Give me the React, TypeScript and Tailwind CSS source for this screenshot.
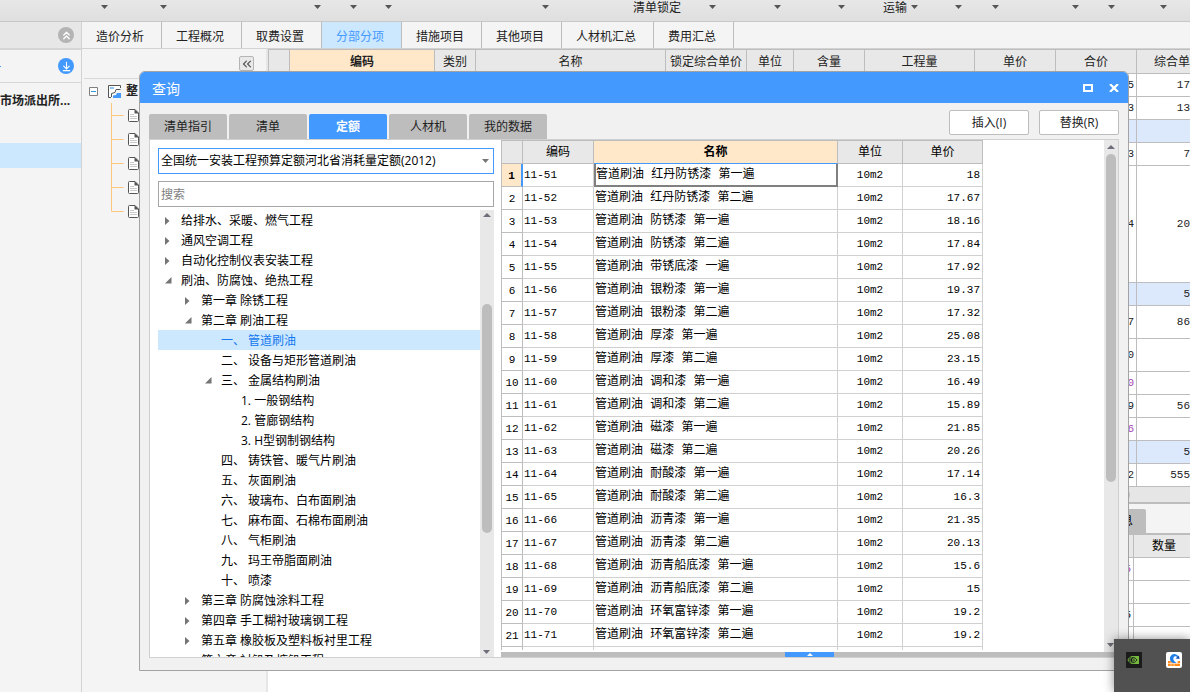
import { useState } from "react";
import { ArrowDownToLine, ChevronsLeft, ChevronsUp } from "lucide-react";

const toolbarItems = [
  { width: "w-[109px]" },
  { width: "w-[59px]" },
  { width: "w-[154px]" },
  { width: "w-9" },
  { width: "w-[35px]" },
  { width: "w-[157px]" },
  { width: "w-[167px]", label: "清单锁定", gap: "gap-7" },
  { width: "w-[65px]" },
  { width: "w-16" },
  { width: "w-[73px]", label: "运输", gap: "gap-1" },
  { width: "w-11" },
  { width: "w-[37px]" },
  { width: "w-20" },
  { width: "w-9" },
  { width: "w-[52px]" },
];

const mainTabs = ["造价分析", "工程概况", "取费设置", "分部分项", "措施项目", "其他项目", "人材机汇总", "费用汇总"];

const mainColumns = [
  { label: "", width: "w-[21px]" },
  { label: "编码", width: "w-[145px]" },
  { label: "类别", width: "w-[41px]" },
  { label: "名称", width: "w-[190px]" },
  { label: "锁定综合单价", width: "w-[81px]" },
  { label: "单位", width: "w-[47px]" },
  { label: "含量", width: "w-[71px]" },
  { label: "工程量", width: "w-[110px]" },
  { label: "单价", width: "w-[81px]" },
  { label: "合价", width: "w-[81px]" },
];

const mainRows = [
  { total: "5", price: "17", height: "h-[23px]" },
  { total: "3", price: "13", height: "h-[23px]" },
  { total: "", price: "", height: "h-[23px]", section: true },
  { total: "3", price: "7", height: "h-[23px]" },
  { total: "4", price: "20", height: "h-[117px]" },
  { total: "", price: "5", height: "h-[23px]", section: true },
  { total: "7", price: "86", height: "h-[33px]" },
  { total: "0", price: "", height: "h-[33px]" },
  { total: "0", price: "", height: "h-[23px]", purple: true },
  { total: "9", price: "56", height: "h-[23px]" },
  { total: "6", price: "", height: "h-[23px]", purple: true },
  { total: "", price: "5", height: "h-[23px]", section: true },
  { total: "2", price: "555", height: "h-[23px]" },
];

const dialogTabs = ["清单指引", "清单", "定额", "人材机", "我的数据"];

type TreeNode = { text: string; level: number; state?: "open" | "closed" };

const tree: TreeNode[] = [
  { text: "给排水、采暖、燃气工程", level: 0, state: "closed" },
  { text: "通风空调工程", level: 0, state: "closed" },
  { text: "自动化控制仪表安装工程", level: 0, state: "closed" },
  { text: "刷油、防腐蚀、绝热工程", level: 0, state: "open" },
  { text: "第一章 除锈工程", level: 1, state: "closed" },
  { text: "第二章 刷油工程", level: 1, state: "open" },
  { text: "一、 管道刷油", level: 2 },
  { text: "二、 设备与矩形管道刷油", level: 2 },
  { text: "三、 金属结构刷油", level: 2, state: "open" },
  { text: "1. 一般钢结构", level: 3 },
  { text: "2. 管廊钢结构", level: 3 },
  { text: "3. H型钢制钢结构", level: 3 },
  { text: "四、 铸铁管、暖气片刷油", level: 2 },
  { text: "五、 灰面刷油", level: 2 },
  { text: "六、 玻璃布、白布面刷油", level: 2 },
  { text: "七、 麻布面、石棉布面刷油", level: 2 },
  { text: "八、 气柜刷油", level: 2 },
  { text: "九、 玛王帝脂面刷油", level: 2 },
  { text: "十、 喷漆", level: 2 },
  { text: "第三章 防腐蚀涂料工程", level: 1, state: "closed" },
  { text: "第四章 手工糊衬玻璃钢工程", level: 1, state: "closed" },
  { text: "第五章 橡胶板及塑料板衬里工程", level: 1, state: "closed" },
  { text: "第六章 衬铅及搪铅工程", level: 1, state: "closed" },
];

const indent = ["pl-0", "pl-5", "pl-10", "pl-15"];

const quotaRows = [
  ["11-51", "管道刷油 红丹防锈漆 第一遍", "18"],
  ["11-52", "管道刷油 红丹防锈漆 第二遍", "17.67"],
  ["11-53", "管道刷油 防锈漆 第一遍", "18.16"],
  ["11-54", "管道刷油 防锈漆 第二遍", "17.84"],
  ["11-55", "管道刷油 带锈底漆 一遍", "17.92"],
  ["11-56", "管道刷油 银粉漆 第一遍", "19.37"],
  ["11-57", "管道刷油 银粉漆 第二遍", "17.32"],
  ["11-58", "管道刷油 厚漆 第一遍", "25.08"],
  ["11-59", "管道刷油 厚漆 第二遍", "23.15"],
  ["11-60", "管道刷油 调和漆 第一遍", "16.49"],
  ["11-61", "管道刷油 调和漆 第二遍", "15.89"],
  ["11-62", "管道刷油 磁漆 第一遍", "21.85"],
  ["11-63", "管道刷油 磁漆 第二遍", "20.26"],
  ["11-64", "管道刷油 耐酸漆 第一遍", "17.14"],
  ["11-65", "管道刷油 耐酸漆 第二遍", "16.3"],
  ["11-66", "管道刷油 沥青漆 第一遍", "21.35"],
  ["11-67", "管道刷油 沥青漆 第二遍", "20.13"],
  ["11-68", "管道刷油 沥青船底漆 第一遍", "15.6"],
  ["11-69", "管道刷油 沥青船底漆 第二遍", "15"],
  ["11-70", "管道刷油 环氧富锌漆 第一遍", "19.2"],
  ["11-71", "管道刷油 环氧富锌漆 第二遍", "19.2"],
];

const monoFont = "font-['Liberation_Mono','Noto_Sans_CJK_SC',monospace]";
const mono = "font-['Liberation_Mono','Noto_Sans_CJK_SC',monospace] text-[11px]";

function Caret({ up = false, className = "" }: { up?: boolean; className?: string }) {
  return (
    <svg width="8" height="4" viewBox="0 0 8 4" className={`shrink-0 ${className}`} fill="currentColor">
      <path d={up ? "M0 4 4 0l4 4z" : "M0 0h7L3.5 4z"} />
    </svg>
  );
}

function TreeArrow({ state }: { state?: "open" | "closed" }) {
  return (
    <span className="flex w-[23px] shrink-0 items-center pl-[7px] text-[#757575]">
      {state === "closed" && (
        <svg width="5" height="8" viewBox="0 0 5 8" fill="currentColor"><path d="M0 0l4.5 4L0 8z" /></svg>
      )}
      {state === "open" && (
        <svg width="7" height="7" viewBox="0 0 7 7" fill="currentColor"><path d="M6.5 0v6.500H0z" /></svg>
      )}
    </span>
  );
}

function DocIcon() {
  return (
    <svg width="11" height="13" viewBox="0 0 11 13" fill="none">
      <path d="M1.500 .5h5.500l3.500 3.500v7.500q0 1-1 1h-8q-1 0-1-1v-10q0-1 1-1z" fill="#fff" stroke="#555" />
      <path d="M6.500 0v4.500H11z" fill="#555" />
      <path d="M2 5.500h4M2 7.500h7M2 9.500h7" stroke="#c8c8c8" />
    </svg>
  );
}

function Toolbar() {
  return (
    <header className="flex h-[22px] shrink-0 overflow-hidden border-b border-[#c8c8c8] bg-linear-to-b from-[#e7e7e7] to-[#dfdfdf]">
      {toolbarItems.map((item, i) => (
        <button
          key={i}
          aria-label={item.label ?? "更多"}
          className={`flex h-4 shrink-0 justify-end whitespace-nowrap text-[#222] ${item.width} ${item.gap ?? ""}`}
        >
          {item.label}
          <Caret className="mt-[5px] text-[#555]" />
        </button>
      ))}
    </header>
  );
}

function Sidebar() {
  return (
    <aside className="w-[82px] shrink-0 border-r border-[#d2d2d2] bg-[#f4f4f4]">
      <div className="flex h-7 items-center justify-end border-b-2 border-[#d6d6d6] bg-[#e7e7e7] pr-[7px]">
        <button aria-label="收起" className="flex size-4 items-center justify-center rounded-full bg-[#b4b4b4] text-white">
          <ChevronsUp size={13} strokeWidth={2.5} />
        </button>
      </div>
      <div className="flex h-[33px] items-center justify-between border-b border-[#d6d6d6] pr-[7px]">
        <span className="h-px w-px bg-[#4499ff]" />
        <button aria-label="下载" className="flex size-4 items-center justify-center rounded-full bg-[#4499ff] text-white">
          <ArrowDownToLine size={11} strokeWidth={2.5} />
        </button>
      </div>
      <p className="h-[60px] overflow-hidden pt-2 leading-5 font-bold whitespace-nowrap text-[#222]">市场派出所...</p>
      <div className="h-[25px] bg-[#cce8ff]" />
    </aside>
  );
}

function ProjectTree() {
  return (
    <div className="w-[186px] shrink-0 border-r-2 border-[#e6e6e6] bg-[#f4f4f4] pl-[2px]">
      <div className="flex h-[30px] items-center justify-end border-b border-[#d9d9d9] pr-3">
        <button aria-label="折叠" className="flex size-[15px] items-center justify-center rounded-xs border border-[#b5b5b5] bg-[#e9e9e9] text-[#555]">
          <ChevronsLeft size={14} strokeWidth={2} className="shrink-0" />
        </button>
      </div>
      <div className="flex h-6 items-center pl-[5px]">
        <svg width="9" height="9" viewBox="0 0 9 9" fill="none">
          <path d="M.5.5h8v8h-8z" fill="#fff" stroke="#808080" />
          <path d="M2 4.500h5" stroke="#2f9bd8" />
        </svg>
        <svg width="13" height="13" viewBox="0 0 13 13" fill="none" className="ml-[10px]">
          <path d="M12.500 3V.5H.5v12H3" fill="#fff" stroke="#555" />
          <path d="M2 2h4v2H2z" fill="#8cc4f5" />
          <path d="M3.500 12V8.500L7 7.500l1-3h4.500" stroke="#555" />
          <path d="M5 13v-2.500l3-.5 1-2h4v5z" fill="#4499ff" />
        </svg>
        <span className="ml-[5px] font-bold text-[#222]">整</span>
      </div>
      <div className="flex pl-[27px]">
        <svg width="13" height="109" viewBox="0 0 13 109" fill="none" stroke="#fcc77c">
          <path d="M.5 0v108.500M.5 12.500h12M.5 36.500h12M.5 60.500h12M.5 84.500h12M.5 108.500h12" />
        </svg>
        <ul className="ml-1">
          {[0, 1, 2, 3, 4].map((n) => (
            <li key={n} className="flex h-6 items-center"><DocIcon /></li>
          ))}
        </ul>
      </div>
    </div>
  );
}

function MainTable() {
  return (
    <table className="w-full table-fixed border-separate border-spacing-0 border-t border-l border-[#bdbdbd] bg-white text-[#222]">
      <thead>
        <tr className="h-6">
          {mainColumns.map((col) => (
            <th
              key={col.label}
              className={`border-r border-b border-[#bdbdbd] p-0 whitespace-nowrap ${col.width} ${col.label === "编码" ? "bg-[#ffe8ca] font-bold" : "bg-[#e8e8e8] font-normal"}`}
            >
              {col.label}
            </th>
          ))}
          <th className="overflow-hidden border-b border-[#bdbdbd] bg-[#e8e8e8] p-0 pl-[17px] text-left font-normal whitespace-nowrap">综合单价</th>
        </tr>
      </thead>
      <tbody>
        {mainRows.map((row, i) => (
          <tr key={i} className={`${row.height} ${row.section ? "bg-[#dce9fd]" : ""} ${row.purple ? "text-[#a33fb5]" : ""}`}>
            <td colSpan={10} className={`border-r border-b border-[#bdbdbd] p-0 pr-[2px] text-right leading-4 ${mono}`}>{row.total}</td>
            <td className={`border-b border-[#bdbdbd] p-0 text-right leading-4 ${mono}`}>{row.price}</td>
          </tr>
        ))}
      </tbody>
    </table>
  );
}

function DetailPanel() {
  return (
    <section>
      <div className="flex h-[17px] items-center border-b-2 border-[#bdbdbd] bg-[#e6e6e6] pr-[60px]">
        <div className="h-[10px] flex-1 rounded-full bg-[#bdbdbd]" />
      </div>
      <div className="flex h-[31px] items-end justify-end border-b-2 border-[#bdbdbd] bg-[#f4f4f4] pr-11">
        <button className="h-6 w-20 rounded-t-xs bg-[#bdbdbd] pr-[13px] text-right">说明信息</button>
      </div>
      <table className="w-full table-fixed border-separate border-spacing-0 bg-white">
        <thead>
          <tr className="h-[23px] bg-[#e8e8e8]">
            <th className="border-r border-b border-[#bdbdbd] p-0" />
            <th className="w-14 border-b border-[#bdbdbd] p-0 pl-1 font-normal">数量</th>
          </tr>
        </thead>
        <tbody>
          {["5", "", "5", ""].map((value, i) => (
            <tr key={i} className="h-[23px]">
              <td className={`border-r border-b border-[#bdbdbd] p-0 pr-[2px] text-right leading-4 ${mono} ${i === 0 ? "text-[#a33fb5]" : ""}`}>{value}</td>
              <td className="border-b border-[#bdbdbd] p-0" />
            </tr>
          ))}
        </tbody>
      </table>
    </section>
  );
}

function QuotaTree() {
  const [selected, setSelected] = useState("一、 管道刷油");

  return (
    <div className="flex w-[336px] shrink-0 flex-col pt-2">
      <div className="relative">
        <select
          aria-label="定额库"
          className="h-[26px] w-full appearance-none border border-[#4499ff] bg-white pl-[2px] text-black outline-none"
        >
          <option>全国统一安装工程预算定额河北省消耗量定额(2012)</option>
        </select>
        <Caret className="pointer-events-none absolute top-[11px] right-1 text-[#777]" />
      </div>
      <input
        aria-label="搜索"
        placeholder="搜索"
        className="mt-[7px] h-[26px] w-full border border-[#a6a6a6] bg-white pt-px pl-[2px] text-black outline-none placeholder:text-[#808080]"
      />
      <div className="mt-[3px] flex min-h-0 flex-1">
        <ul className="flex-1 overflow-hidden">
          {tree.map((node) => (
            <li key={node.text}>
              <button
                onClick={() => setSelected(node.text)}
                className={`flex h-5 w-full pt-px text-left leading-5 whitespace-nowrap ${indent[node.level]} ${node.text === selected ? "bg-[#cce8ff] text-[#1478f0]" : "text-black"}`}
              >
                <TreeArrow state={node.state} />
                {node.text}
              </button>
            </li>
          ))}
        </ul>
        <div className="flex w-[14px] flex-col items-center bg-[#e8e8e8] py-[3px] text-[#6e6e7a]">
          <Caret up />
          <div className="flex w-full flex-1 flex-col items-center">
            <div className="h-[20%]" />
            <div className="h-[53%] w-[10px] rounded-full bg-[#bdbdbd]" />
          </div>
          <Caret />
        </div>
      </div>
    </div>
  );
}

function QuotaTable() {
  const head = "border-r border-b border-[#bdbdbd] p-0 leading-4";
  const cell = "border-r border-b border-[#d0d0d0] p-0 leading-4";

  return (
    <div className="ml-[7px] flex min-w-0 flex-1 flex-col">
      <div className="flex min-h-0 flex-1">
        <div className="flex-1 overflow-hidden pb-[2px]">
          <div className="h-full overflow-hidden">
            <table className="w-[482px] table-fixed border-separate border-spacing-0 border-l border-[#bdbdbd] text-black">
              <thead>
                <tr className="h-6 bg-[#e8e8e8]">
                  <th className={`w-[21px] border-t ${head}`} />
                  <th className={`w-[71px] border-t font-normal ${head}`}>编码</th>
                  <th className="w-[244px] border-t border-r border-b border-t-[#bdbdbd] border-r-[#bdbdbd] border-b-[#4499ff] bg-[#ffe8ca] p-0 leading-4 font-bold">名称</th>
                  <th className={`w-[65px] border-t font-normal ${head}`}>单位</th>
                  <th className={`w-20 border-t font-normal ${head}`}>单价</th>
                </tr>
              </thead>
              <tbody>
                {quotaRows.map(([code, name, price], i) => (
                  <tr key={code} className="h-[23px]">
                    <td
                      className={`p-0 pt-px text-center leading-4 ${mono} ${i === 0 ? "border-r-2 border-b border-r-[#4499ff] border-b-[#bdbdbd] bg-[#ffe8ca] font-bold" : "border-r border-b border-[#bdbdbd]"}`}
                    >
                      {i + 1}
                    </td>
                    <td className={`pl-px ${cell} ${mono}`}>{code}</td>
                    <td
                      className={`whitespace-nowrap ${monoFont} ${i === 0 ? "border-r-2 border-b-2 border-l-2 border-[#808080] p-0 leading-4" : `pl-px ${cell}`}`}
                    >
                      {name}
                    </td>
                    <td className={`text-center ${cell} ${mono}`}>10m2</td>
                    <td className={`pr-[2px] text-right ${cell} ${mono}`}>{price}</td>
                  </tr>
                ))}
                <tr className="h-[23px]">
                  <td className="border-r border-[#bdbdbd]" />
                  <td className="border-r border-[#d0d0d0]" />
                  <td className="border-r border-[#d0d0d0]" />
                  <td className="border-r border-[#d0d0d0]" />
                  <td className="border-r border-[#d0d0d0]" />
                </tr>
              </tbody>
            </table>
          </div>
        </div>
        <div className="flex w-[14px] flex-col items-center bg-[#e8e8e8] py-[5px] text-[#6e6e7a]">
          <Caret up />
          <div className="mt-[5px] w-full flex-1">
            <div className="mx-auto h-[67%] w-[10px] rounded-full bg-[#bdbdbd]" />
          </div>
          <Caret />
        </div>
      </div>
      <div className="flex h-[5px] justify-center bg-[#bdbdbd]">
        <button aria-label="展开" className="flex w-[49px] items-center justify-center bg-[#4499ff] text-white">
          <svg width="6" height="3" viewBox="0 0 6 3" fill="currentColor"><path d="M0 3l3-3 3 3z" /></svg>
        </button>
      </div>
    </div>
  );
}

function QueryDialog() {
  const [tab, setTab] = useState("定额");

  return (
    <div
      role="dialog"
      aria-label="查询"
      className="absolute top-[71px] right-[61px] bottom-[21px] left-[139px] flex flex-col overflow-hidden rounded-t-md border border-[#a3a3a3] bg-[#f1f1f1]"
    >
      <div className="flex h-[31px] shrink-0 items-center bg-[#4499ff] pr-[9px] pl-3 text-white">
        <h2 className="flex-1 pt-[3px] text-sm leading-5">查询</h2>
        <button aria-label="最大化" className="mr-4">
          <svg width="10" height="8" viewBox="0 0 10 8" fill="none"><path d="M1 1h8v6H1z" stroke="#fff" strokeWidth="2" /></svg>
        </button>
        <button aria-label="关闭">
          <svg width="10" height="8" viewBox="0 0 10 8" fill="none"><path d="M1 0l8 8M9 0L1 8" stroke="#fff" strokeWidth="2.200" /></svg>
        </button>
      </div>
      <div className="flex h-9 shrink-0 items-end gap-[2px] px-[9px]">
        {dialogTabs.map((name) => (
          <button
            key={name}
            onClick={() => setTab(name)}
            className={`h-[25px] w-[78px] rounded-t-xs ${name === tab ? "bg-[#4499ff] font-bold text-white" : "bg-[#bdbdbd] text-[#222]"}`}
          >
            {name}
          </button>
        ))}
        <div className="mb-1 ml-auto flex gap-[10px] text-[#222]">
          <button className="h-[25px] w-20 rounded-xs border border-[#bdbdbd] bg-white">插入(I)</button>
          <button className="h-[25px] w-20 rounded-xs border border-[#bdbdbd] bg-white">替换(R)</button>
        </div>
      </div>
      <div className="mx-[9px] mb-3 flex min-h-0 flex-1 border border-[#d0d0d0] bg-white pl-2">
        <QuotaTree />
        <QuotaTable />
      </div>
    </div>
  );
}

function Tray() {
  return (
    <div className="absolute right-0 bottom-0 flex h-[53px] w-[76px] gap-6 bg-[#515151] pt-[13px] pl-3 shadow-[0_0_10px_rgba(0,0,0,0.45)]">
      <svg width="16" height="16" viewBox="0 0 16 16" fill="none">
        <path d="M0 0h16v16H0z" fill="#1b1b1b" />
        <path d="M6 4h7v8H6z" fill="#76b93f" />
        <path d="M6 4.500C4 5 2.500 6.500 2 8c1 2 2.500 3.300 4 3.500" stroke="#76b93f" />
        <path d="M6 5.500c2.500-.3 4 1 5 2.500-1.500 2-3 3-5 2.700C4.800 10.300 4 9.300 4 8c.7-1.300 2-1.600 3-1.200 1 .4 1 1.200 1.700 1.400C8 9.300 6.800 9.500 6 8.500" stroke="#1b1b1b" strokeWidth=".9" />
        <path d="M6 5.500C4.700 6 4 7 4 8c.2 1.500 1 2.300 2 2.600" stroke="#76b93f" strokeWidth=".8" />
      </svg>
      <svg width="16" height="16" viewBox="0 0 16 16" fill="none">
        <rect width="16" height="16" rx="2" fill="#fff" />
        <path d="M2 9h3.500l1.500 2h4l1-2h2v5H2z" fill="#ff8a1c" />
        <path d="M2 11.500h12M5 9.500v2M8 11.500V14M11 10v1.500M5 11.500V14" stroke="#fff" strokeWidth=".6" />
        <path d="M12.500 4.500C10.500 1 5.500 1 4 5.500c-.5 2.500.8 4.800 3.500 5.500h3C8 9.500 6.800 7.500 7.500 5.500 8.300 4 10 3.800 11 5z" fill="#1e7fe6" />
        <path d="M13 3.500L13.500 7 9.500 6.500z" fill="#1553b5" />
      </svg>
    </div>
  );
}

export default function App() {
  const [tab, setTab] = useState("分部分项");

  return (
    <div className="relative flex h-screen flex-col overflow-hidden bg-white font-['Open_Sans','Noto_Sans_CJK_SC',sans-serif] text-xs leading-4">
      <Toolbar />
      <div className="flex min-h-0 flex-1">
        <Sidebar />
        <main className="flex min-w-0 flex-1 flex-col">
          <nav className="flex h-[27px] shrink-0 border-b border-[#d2d2d2] bg-[#f4f4f4]">
            {mainTabs.map((name) => (
              <button
                key={name}
                onClick={() => setTab(name)}
                className={`border-r border-[#bdbdbd] pt-1 pr-[17px] pl-[14px] whitespace-nowrap ${name === tab ? "bg-[#cce8ff] text-[#4499ff]" : "text-[#222]"}`}
              >
                {name}
              </button>
            ))}
          </nav>
          <div className="flex min-h-0 flex-1">
            <ProjectTree />
            <div className="min-w-0 flex-1 overflow-hidden">
              <MainTable />
              <DetailPanel />
            </div>
          </div>
        </main>
      </div>
      <QueryDialog />
      <Tray />
    </div>
  );
}
